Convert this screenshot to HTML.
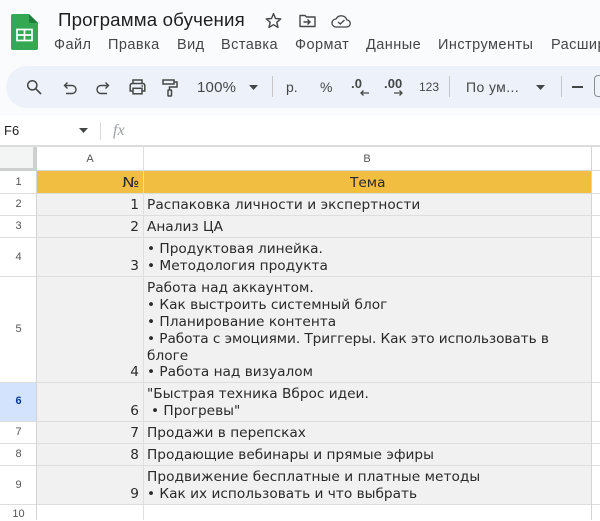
<!DOCTYPE html>
<html><head><meta charset="utf-8"><style>
html,body{margin:0;padding:0}
body{width:600px;height:520px;overflow:hidden;background:#fff;position:relative;font-family:"Liberation Sans",sans-serif}
#top{position:absolute;left:0;top:0;width:600px;height:115px;background:#f9fbfd}
#bar{position:absolute;left:6px;top:66px;width:640px;height:42px;border-radius:21px;background:#edf2fa}
.t{position:absolute;white-space:nowrap;line-height:18px;color:#444746}
.m{font-size:14.5px;top:36px;letter-spacing:.45px;color:#444746}
.c{position:absolute;white-space:nowrap;font-family:"DejaVu Sans",sans-serif;font-size:13.7px;line-height:17px;color:#2a2a2a;margin-top:1px}
.n{right:461px}
.r{position:absolute;left:0;width:37px;text-align:center;font-size:11px;color:#555;line-height:14px;font-family:"Liberation Sans",sans-serif}
.l{position:absolute;background:#dedede}
svg{position:absolute;overflow:visible}
</style></head><body>
<div id="top"></div><div id="bar"></div>

<svg style="left:11px;top:14px" width="28" height="37" viewBox="0 0 28 37"><path d="M2 0H18L27 9V34a2 2 0 0 1-2 2H2a2 2 0 0 1-2-2V2A2 2 0 0 1 2 0Z" fill="#34a853"/><path d="M18 0L27 9H20a2 2 0 0 1-2-2Z" fill="#1e7e3c"/><rect x="6" y="15.5" width="15" height="11" fill="none" stroke="#fff" stroke-width="1.7"/><path d="M6 21H21M13.5 15.5V26.5" stroke="#fff" stroke-width="1.7"/></svg>

<div class="t" style="left:58px;top:9px;font-size:18.7px;line-height:22px;color:#1f1f1f;letter-spacing:.15px">Программа обучения</div>
<svg style="left:265px;top:12px" width="17" height="17" viewBox="0 0 17 17"><path d="M8.5 1.6L10.5 6.5L15.8 6.9L11.8 10.3L13 15.4L8.5 12.7L4 15.4L5.2 10.3L1.2 6.9L6.5 6.5Z" fill="none" stroke="#444746" stroke-width="1.4" stroke-linejoin="round"/></svg>
<svg style="left:299px;top:14px" width="17" height="14" viewBox="0 0 17 14"><path d="M1 12.5V1.5H6L7.5 3H16V12.5Z" fill="none" stroke="#444746" stroke-width="1.4" stroke-linejoin="round"/><path d="M4.5 8H11M8.5 5.5L11 8L8.5 10.5" fill="none" stroke="#444746" stroke-width="1.4"/></svg>
<svg style="left:331px;top:14px" width="20" height="14" viewBox="0 0 20 14"><path d="M5 13H15.5a3.5 3.5 0 0 0 .5-7A6 6 0 0 0 5 5A4 4 0 0 0 5 13Z" fill="none" stroke="#444746" stroke-width="1.3"/><path d="M7 8L9.3 10L13.5 6" fill="none" stroke="#444746" stroke-width="1.3"/></svg>

<div class="t m" style="left:54px">Файл</div>
<div class="t m" style="left:108px">Правка</div>
<div class="t m" style="left:177px">Вид</div>
<div class="t m" style="left:221px">Вставка</div>
<div class="t m" style="left:295px">Формат</div>
<div class="t m" style="left:366px">Данные</div>
<div class="t m" style="left:438px">Инструменты</div>
<div class="t m" style="left:551px">Расшир</div>

<svg style="left:26px;top:79px" width="16" height="16" viewBox="0 0 16 16"><circle cx="6.3" cy="6.3" r="4.6" fill="none" stroke="#444746" stroke-width="1.5"/><path d="M9.8 9.8L15 15" stroke="#444746" stroke-width="1.6"/></svg>
<svg style="left:63px;top:81px" width="14" height="14" viewBox="0 0 14 14"><path d="M4.5 1.5L1.5 4.5L4.5 7.5M1.5 4.5H9a3.6 3.6 0 0 1 0 8H3" fill="none" stroke="#444746" stroke-width="1.4"/></svg>
<svg style="left:96px;top:81px" width="14" height="14" viewBox="0 0 14 14"><path d="M9.5 1.5L12.5 4.5L9.5 7.5M12.5 4.5H5a3.6 3.6 0 0 0 0 8H11" fill="none" stroke="#444746" stroke-width="1.4"/></svg>
<svg style="left:129px;top:79px" width="17" height="16" viewBox="0 0 17 16"><path d="M4 4V1H13V4M4 12H1.2V6.3A2 2 0 0 1 3 4.5H14A2 2 0 0 1 15.8 6.3V12H13" fill="none" stroke="#444746" stroke-width="1.5"/><rect x="4" y="9.3" width="9" height="5.5" fill="none" stroke="#444746" stroke-width="1.5"/><circle cx="13.2" cy="7" r=".9" fill="#444746"/></svg>
<svg style="left:162px;top:79px" width="16" height="18" viewBox="0 0 16 18"><path d="M1 1H12V5H1ZM12 3H15V8H7.5V11" fill="none" stroke="#444746" stroke-width="1.5"/><rect x="6" y="11" width="3.5" height="6" rx=".6" fill="none" stroke="#444746" stroke-width="1.5"/></svg>

<div class="t" style="left:197px;top:79px;font-size:15px;letter-spacing:.2px">100%</div>
<svg style="left:249px;top:85px" width="9" height="5"><path d="M0 0H9L4.5 5Z" fill="#444746"/></svg>
<div class="l" style="left:272px;top:76px;width:1px;height:21px;background:#c7c7c7"></div>
<div class="t" style="left:286px;top:78px;font-size:14px">р.</div>
<div class="t" style="left:320px;top:78px;font-size:14px">%</div>
<div class="t" style="left:351px;top:75px;font-size:13px;font-weight:bold;letter-spacing:.2px">.0</div>
<svg style="left:360px;top:90px" width="9" height="6"><path d="M9 3H1M3.5 .5L1 3L3.5 5.5" fill="none" stroke="#444746" stroke-width="1.3"/></svg>
<div class="t" style="left:384px;top:75px;font-size:13px;font-weight:bold;letter-spacing:.1px">.00</div>
<svg style="left:394px;top:90px" width="9" height="6"><path d="M0 3H8M5.5 .5L8 3L5.5 5.5" fill="none" stroke="#444746" stroke-width="1.3"/></svg>
<div class="t" style="left:419px;top:78px;font-size:12px">123</div>
<div class="l" style="left:449px;top:76px;width:1px;height:21px;background:#c7c7c7"></div>
<div class="t" style="left:466px;top:78px;font-size:14px;letter-spacing:.4px">По ум...</div>
<svg style="left:536px;top:85px" width="9" height="5"><path d="M0 0H9L4.5 5Z" fill="#444746"/></svg>
<div class="l" style="left:561px;top:76px;width:1px;height:21px;background:#c7c7c7"></div>
<div class="l" style="left:572px;top:86px;width:11px;height:1.5px;background:#444746"></div>
<div style="position:absolute;left:594px;top:75px;width:12px;height:22px;border:1px solid #8a8d90;border-radius:4px;box-sizing:border-box"></div>

<!-- formula bar -->
<div style="position:absolute;left:0;top:115px;width:600px;height:31px;background:#fff"></div>
<div class="t" style="left:4px;top:122px;font-size:13px;color:#1f1f1f">F6</div>
<svg style="left:79px;top:128px" width="9" height="5"><path d="M0 0H9L4.5 5Z" fill="#444746"/></svg>
<div class="l" style="left:100px;top:122px;width:1px;height:18px;background:#d9d9d9"></div>
<div class="t" style="left:113px;top:122px;font-family:'Liberation Serif',serif;font-style:italic;font-size:16px;color:#9aa0a6">fx</div>

<!-- grid -->
<div style="position:absolute;left:37px;top:171px;width:554px;height:22px;background:#f1be42"></div>
<div style="position:absolute;left:37px;top:193px;width:554px;height:311px;background:#f1f1f1"></div>
<div style="position:absolute;left:0;top:382px;width:37px;height:39px;background:#d3e3fd"></div>
<div style="position:absolute;left:0;top:146px;width:33px;height:22px;background:#f3f4f4"></div>
<div class="l" style="left:33px;top:146px;width:4px;height:25px;background:#cdd0ce"></div>
<div class="l" style="left:0;top:168px;width:37px;height:3px;background:#cdd0ce"></div>
<div class="l" style="left:0;top:145px;width:600px;height:1.5px;background:#dcdcdc"></div>
<div class="l" style="left:37px;top:170px;width:563px;height:1px;background:#d8d8d8"></div>
<div class="l" style="left:0;top:192.5px;width:600px;height:1px"></div>
<div class="l" style="left:0;top:214.5px;width:600px;height:1px"></div>
<div class="l" style="left:0;top:236.5px;width:600px;height:1px"></div>
<div class="l" style="left:0;top:275.5px;width:600px;height:1px"></div>
<div class="l" style="left:0;top:381.5px;width:600px;height:1px"></div>
<div class="l" style="left:0;top:420.5px;width:600px;height:1px"></div>
<div class="l" style="left:0;top:442.5px;width:600px;height:1px"></div>
<div class="l" style="left:0;top:464.5px;width:600px;height:1px"></div>
<div class="l" style="left:0;top:503.5px;width:600px;height:1px"></div>
<div class="l" style="left:36px;top:171px;width:1px;height:349px;background:#d4d4d4"></div>
<div class="l" style="left:142.5px;top:146px;width:1px;height:374px"></div>
<div class="l" style="left:591px;top:146px;width:1px;height:374px;background:#d4d4d4"></div>

<div class="r" style="top:152px;left:37px;width:106px">A</div>
<div class="r" style="top:152px;left:143px;width:448px">B</div>
<div class="r" style="top:175px">1</div>
<div class="r" style="top:197px">2</div>
<div class="r" style="top:219px">3</div>
<div class="r" style="top:250px">4</div>
<div class="r" style="top:322px">5</div>
<div class="r" style="top:394px;color:#0b3d91;font-weight:bold">6</div>
<div class="r" style="top:425px">7</div>
<div class="r" style="top:447px">8</div>
<div class="r" style="top:478px">9</div>
<div class="r" style="top:507px">10</div>

<div class="c n" style="top:174px;transform:scaleX(1.2);transform-origin:right">№</div>
<div class="c" style="left:350px;top:174px">Тема</div>
<div class="c n" style="top:196px">1</div>
<div class="c" style="left:147px;top:196px;letter-spacing:.06px">Распаковка личности и экспертности</div>
<div class="c n" style="top:218px">2</div>
<div class="c" style="left:147px;top:218px">Анализ ЦА</div>
<div class="c" style="left:147px;top:240px">• Продуктовая линейка.</div>
<div class="c n" style="top:257px">3</div>
<div class="c" style="left:147px;top:257px">• Методология продукта</div>
<div class="c" style="left:147px;top:279px">Работа над аккаунтом.</div>
<div class="c" style="left:147px;top:296px">• Как выстроить системный блог</div>
<div class="c" style="left:147px;top:313px">• Планирование контента</div>
<div class="c" style="left:147px;top:330px;letter-spacing:-.08px">• Работа с эмоциями. Триггеры. Как это использовать в</div>
<div class="c" style="left:147px;top:347px">блоге</div>
<div class="c n" style="top:363px">4</div>
<div class="c" style="left:147px;top:363px">• Работа над визуалом</div>
<div class="c" style="left:147px;top:385px">"Быстрая техника Вброс идеи.</div>
<div class="c n" style="top:402px">6</div>
<div class="c" style="left:151px;top:402px">• Прогревы"</div>
<div class="c n" style="top:424px">7</div>
<div class="c" style="left:147px;top:424px">Продажи в перепсках</div>
<div class="c n" style="top:446px">8</div>
<div class="c" style="left:147px;top:446px">Продающие вебинары и прямые эфиры</div>
<div class="c" style="left:147px;top:468px;letter-spacing:.05px">Продвижение бесплатные и платные методы</div>
<div class="c n" style="top:485px">9</div>
<div class="c" style="left:147px;top:485px">• Как их использовать и что выбрать</div>
</body></html>
